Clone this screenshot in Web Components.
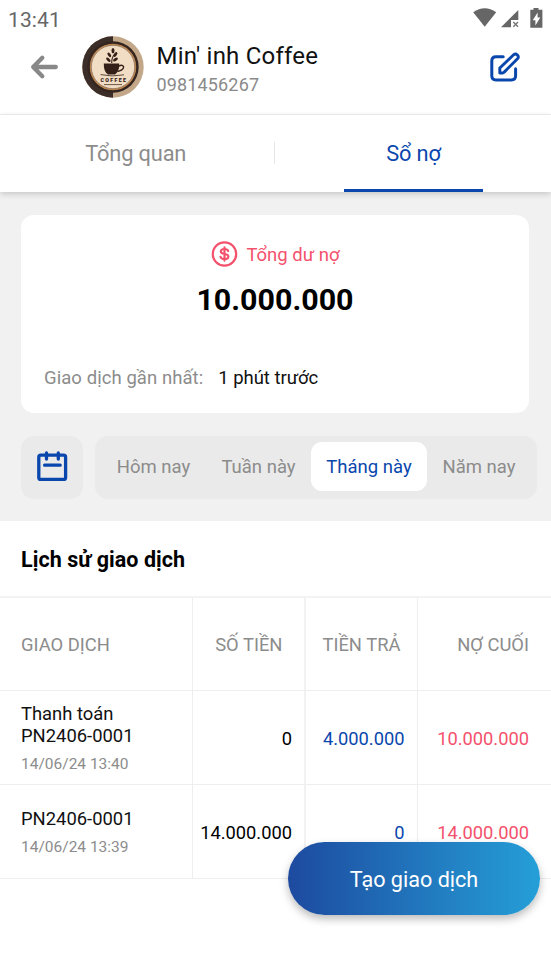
<!DOCTYPE html>
<html lang="vi">
<head>
<meta charset="utf-8">
<title>Sổ nợ</title>
<style>
  html, body { margin: 0; height: 100%; }
  body { background: #fff; font-family: Roboto, "Noto Sans", sans-serif; overflow: hidden; }
</style>
</head>
<body>
<debt-book-app></debt-book-app>
<script>
const define = (name, html) => {
  const template = document.createElement('template');
  template.innerHTML = html;
  customElements.define(name, class extends HTMLElement {
    constructor() {
      super();
      this.attachShadow({ mode: 'open' }).append(template.content.cloneNode(true));
    }
  });
};

define('status-bar', `
<style>
  :host { display: flex; height: 38px; box-sizing: border-box; padding: 0 8px; align-items: center; justify-content: space-between; color: #666; font-size: 21px; letter-spacing: .1px; }
  svg { display: block; margin-top: -2px; }
  span { line-height: 38px; padding-top: 1px; }
</style>
<span>13:41</span>
<svg width="72" height="24" viewBox="0 0 72 24">
  <path d="M2.2 6.2Q13.7-1.8 25.2 6.2L13.7 20.8Z" fill="#666"/>
  <path d="M47.3 4V14H40V21.3H30Z" fill="#666"/>
  <path d="M42.3 16L47 20.8M47 16L42.3 20.8" stroke="#777" stroke-width="1.4"/>
  <path d="M62.5 2h5v1.7h3.9V21.8H59.3V3.7h3.2z" fill="#666"/>
  <path d="M66.6 6.4V11.4H69.3L64.4 19.4V14.2H61.7Z" fill="#fff"/>
</svg>`);

define('shop-avatar', `
<style>:host { display: block; width: 62px; height: 62px; } svg { display: block; }</style>
<svg width="62" height="62" viewBox="0 0 62 62">
  <circle cx="31" cy="31" r="30.7" fill="#c3a789"/>
  <path d="M31 .3A30.7 30.7 0 0 0 31 61.7Z" fill="#3b2d28"/>
  <circle cx="31" cy="31" r="25.7" fill="#35251f"/>
  <circle cx="31" cy="31" r="22.6" fill="#f1ddc4" stroke="#bd8650" stroke-width="1.2"/>
  <circle cx="31" cy="31" r="21.7" fill="none" stroke="#6b4c36" stroke-width=".6"/>
  <path d="M21.8 27.5H37.2C37.6 33 35.5 36.5 33 38.6H26C23 36.5 21.5 32.5 21.8 27.5Z" fill="#352019"/>
  <path d="M36.8 30.1C40 28.2 42.3 29.8 41.4 32S38 35 35.3 35.5" fill="none" stroke="#352019" stroke-width="1.4"/>
  <path d="M18.5 38.6Q30 41.2 42 38.8" fill="none" stroke="#352019" stroke-width=".8"/>
  <path d="M29.7 27C29.5 23 30.5 20.5 32.8 18" fill="none" stroke="#352019" stroke-width="1.1"/>
  <g fill="#352019">
    <ellipse cx="31" cy="14.6" rx="1.5" ry="2.7"/>
    <ellipse cx="27.3" cy="18.8" rx="1.4" ry="2.6" transform="rotate(-35 27.3 18.8)"/>
    <ellipse cx="33.4" cy="18.5" rx="1.5" ry="2.7" transform="rotate(35 33.4 18.5)"/>
    <ellipse cx="26.4" cy="23.7" rx="1.4" ry="2.8" transform="rotate(-48 26.4 23.7)"/>
    <ellipse cx="33.5" cy="23.5" rx="1.4" ry="2.7" transform="rotate(58 33.5 23.5)"/>
  </g>
  <text x="31.2" y="45.9" text-anchor="middle" font-family="Roboto, sans-serif" font-weight="900" font-size="5.4" textLength="25.5" fill="#352019">COFFEE</text>
  <path d="M22 48.6H40" stroke="#4a3326" stroke-width=".8"/>
</svg>`);

define('profile-header', `
<style>
  :host { display: flex; align-items: center; height: 77px; box-sizing: border-box; padding: 0 29px 18px 29px; border-bottom: 1px solid #f0f0f0; }
  .back { margin-right: 23px; }
  shop-avatar { margin-right: 12.5px; }
  .who { flex: 1; display: grid; gap: 1px; padding-top: 4px; }
  .name { font-size: 24px; line-height: 30px; color: #111; letter-spacing: .22px; }
  .phone { font-size: 18px; line-height: 26px; color: #8a8a8a; letter-spacing: .15px; }
  svg { display: block; }
</style>
<svg class="back" width="30" height="28" viewBox="0 0 30 28" fill="none" stroke="#888" stroke-width="4.3" stroke-linecap="round" stroke-linejoin="round"><path d="M26.8 14H4.2M13.3 4.7L4.2 14L13.3 23.2"/></svg>
<shop-avatar></shop-avatar>
<div class="who"><span class="name">Min' inh Coffee</span><span class="phone">0981456267</span></div>
<svg width="34" height="34" viewBox="0 0 34 34" fill="none" stroke="#0a47ad" stroke-width="3" stroke-linejoin="round" stroke-linecap="round">
  <path d="M15.2 6.7H8Q3.8 6.7 3.8 10.9V25.8Q3.8 30 8 30H23.4Q27.6 30 27.6 25.8V18.8"/>
  <path d="M11.8 23V18L25.6 4.8Q27.5 3.2 29.4 5Q31.2 7 29.5 8.8L16.2 22.1Q15.5 23 14.5 23Z" stroke-width="2.9"/>
</svg>`);

define('tab-bar', `
<style>
  :host { display: grid; grid-template-columns: 273.5px 1.5px 1fr; height: 77px; background: #fff; align-items: center; font-size: 21.8px; color: #8c8c8c; letter-spacing: -.15px; box-shadow: 0 2px 6px rgba(0,0,0,.18); position: relative; }
  i { height: 22px; background: #e6e6e6; margin-top: -2px; }
  .on { justify-self: center; width: 139px; height: 77px; box-sizing: border-box; border-bottom: 3px solid #0a47ad; line-height: 78px; text-align: center; color: #0a47ad; padding-left: 1px; }
  .off { text-align: center; line-height: 78px; height: 77px; padding-right: 2px; }
</style>
<div class="off"><slot name="first"></slot></div><i></i><div class="on"><slot name="second"></slot></div>`);

define('balance-card', `
<style>
  :host { display: flex; flex-direction: column; height: 197.5px; box-sizing: border-box; padding: 25px 23px 0; background: #fff; border-radius: 13px; }
  .label { display: flex; justify-content: center; align-items: center; gap: 8px; color: #f4516c; font-size: 18.5px; line-height: 28px; padding-left: 1px; }
  .label span { padding-top: 1px; height: 27px; }
  .sum { text-align: center; font-weight: 700; font-size: 30.4px; line-height: 40px; margin-top: 12px; color: #000; }
  .last { display: flex; gap: 15px; font-size: 18.5px; letter-spacing: .07px; line-height: 28px; margin-top: 44px; color: #8c8c8c; }
  b { font-weight: 400; color: #111; letter-spacing: -.04px; }
  svg { display: block; }
</style>
<div class="label">
  <svg width="27" height="27" viewBox="0 0 27 27" fill="none" stroke="#f4516c" stroke-linecap="round"><circle cx="13.5" cy="13" r="11.7" stroke-width="2.2"/><path transform="translate(0 -.5)" d="M13.5 6.8V20.2M17.2 10.6C16.7 8.8 15.5 8.5 13.5 8.5C11.2 8.5 9.8 9.4 9.8 11C9.8 14.8 17.4 12.2 17.4 16C17.4 17.7 15.8 18.6 13.5 18.6C11.2 18.6 10 17.9 9.5 16.2" stroke-width="2.1"/></svg>
  <span>Tổng dư nợ</span>
</div>
<div class="sum">10.000.000</div>
<div class="last"><span>Giao dịch gần nhất:</span><b>1 phút trước</b></div>`);

define('period-filter', `
<style>
  :host { display: grid; grid-template-columns: 62px 442px; gap: 12px; height: 61.5px; font-size: 18.5px; color: #8c8c8c; }
  .cal, .seg { background: #eaeaea; border-radius: 13px; display: flex; }
  .cal { align-items: center; justify-content: center; }
  .cal svg { margin-top: -2px; }
  .seg { padding: 6px; display: grid; grid-template-columns: 105px 105px 116px 104px; align-items: start; text-align: center; box-sizing: border-box; line-height: 51px; }
  .on { background: #fff; color: #0a47ad; border-radius: 11px; height: 49.5px; }
  svg { display: block; }
</style>
<div class="cal"><svg width="32" height="32" viewBox="0 0 32 32" fill="none" stroke="#0a47ad" stroke-width="3.3" stroke-linecap="round" stroke-linejoin="round"><rect x="2.8" y="5.2" width="26.8" height="24.2" rx="2"/><path d="M10.5 3V9M22.3 3V9M8.6 15.2H24.2"/></svg></div>
<div class="seg"><span>Hôm nay</span><span>Tuần này</span><span class="on">Tháng này</span><span>Năm nay</span></div>`);

define('entry-label', `
<style>
  :host { display: grid; gap: 8px; font-size: 18.4px; line-height: 21.4px; color: #111; padding-top: 1px; }
  small { font-size: 15.5px; line-height: 21px; color: #8c8c8c; }
</style>
<span><slot></slot></span><small><slot name="time"></slot></small>`);

define('history-table', `
<style>
  :host { display: block; }
  h2 { margin: 0; padding: 0 21px; font-size: 21.5px; line-height: 77px; height: 75px; font-weight: 700; color: #000; letter-spacing: .05px; }
  .grid { display: grid; grid-template-columns: 193px 113px 112px 133px; grid-template-rows: 93px 94px 94px; border-top: 2px solid #f3f3f3; font-size: 18.3px; }
  .grid > * { box-sizing: border-box; border-right: 1px solid #eee; border-bottom: 1px solid #eee; display: flex; align-items: center; justify-content: flex-end; padding-right: 12px; padding-top: 2px; }
  .grid > :nth-child(4n+1) { justify-content: flex-start; padding-left: 21px; }
  .grid > :nth-child(4n+2) { border-right: 2px solid #f2f2f2; }
  .grid > :nth-child(4n+3) { padding-right: 12.5px; }
  .grid > :nth-child(4n) { border-right: 0; padding-right: 22px; }
  .grid > :nth-child(-n+4) { color: #8c8c8c; padding-top: 0; font-size: 18.4px; }
  .grid > .h { padding-right: 21.5px; }
  .grid > .m { padding-right: 16.5px; }
  .paid { color: #0a47ad; }
  .debt { color: #f4516c; }
</style>
<h2>Lịch sử giao dịch</h2>
<div class="grid">
  <div>GIAO DỊCH</div><div class="h">SỐ TIỀN</div><div class="m">TIỀN TRẢ</div><div>NỢ CUỐI</div>
  <div><entry-label>Thanh toán<br>PN2406-0001<span slot="time">14/06/24 13:40</span></entry-label></div>
  <div>0</div><div class="paid">4.000.000</div><div class="debt">10.000.000</div>
  <div><entry-label>PN2406-0001<span slot="time">14/06/24 13:39</span></entry-label></div>
  <div>14.000.000</div><div class="paid">0</div><div class="debt">14.000.000</div>
</div>`);

define('create-button', `
<style>
  :host { position: absolute; right: 11px; top: 842px; width: 252px; height: 73px; border-radius: 37px; background: linear-gradient(90deg, #1d4a9f, #259fd8); box-shadow: 0 4px 9px rgba(0,0,0,.27); color: #fff; font-size: 21.6px; line-height: 76px; text-align: center; }
</style>
<slot></slot>`);

define('debt-book-app', `
<style>
  :host { display: block; position: relative; height: 980px; background: #fff; }
  .summary { background: #f1f1f1; padding: 23px 14px 0 21px; display: grid; align-content: start; gap: 23.4px; height: 306px; }
  balance-card { width: 508px; }
</style>
<status-bar></status-bar>
<profile-header></profile-header>
<tab-bar><span slot="first">Tổng quan</span><span slot="second">Sổ nợ</span></tab-bar>
<div class="summary"><balance-card></balance-card><period-filter></period-filter></div>
<history-table></history-table>
<create-button>Tạo giao dịch</create-button>`);
</script>
</body>
</html>
